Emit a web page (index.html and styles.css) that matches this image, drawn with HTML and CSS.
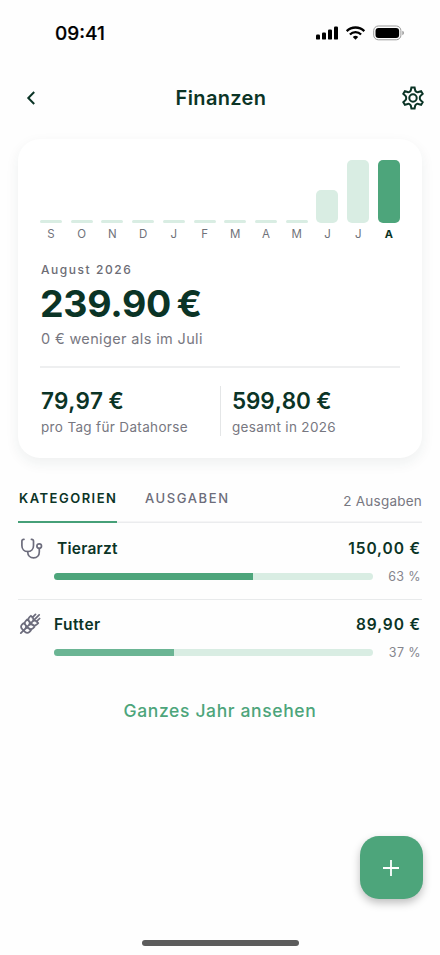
FILE: index.html
```html
<!DOCTYPE html>
<html lang="de">
<head>
<meta charset="utf-8">
<meta name="viewport" content="width=device-width, initial-scale=1">
<title>Finanzen</title>
<link rel="stylesheet" href="styles.css">
</head>
<body>
<div class="screen">
  <header class="status">
    <span class="clock">09:41</span>
    <svg class="status-icons" width="90" height="18" viewBox="0 0 90 18">
      <rect x="1" y="10.6" width="4" height="5" rx="1.2"/>
      <rect x="7" y="8.4" width="4" height="7.2" rx="1.2"/>
      <rect x="13" y="5.4" width="4" height="10.2" rx="1.2"/>
      <rect x="19" y="2.4" width="4" height="13.2" rx="1.2"/>
      <g fill="none" stroke="#000" stroke-width="2.3">
        <path d="M31.7 7.1a12.6 12.6 0 0 1 17.6 0"/>
        <path d="M34.9 10.5a8 8 0 0 1 11.2 0"/>
      </g>
      <path d="M40.500 15.800l-2.700-2.800a4 4 0 0 1 5.400 0z"/>
      <rect x="58.700" y="2" width="27.200" height="13.800" rx="4.600" fill="none" stroke="#999" stroke-width="1"/>
      <rect x="60.500" y="3.900" width="23.600" height="10" rx="3"/>
      <path d="M87.300 6.800q1.700.6 1.700 2.200t-1.700 2.200z" fill="#999"/>
    </svg>
  </header>

  <nav class="topbar">
    <svg class="back" width="24" height="24" viewBox="0 0 24 24"><path d="M15.200 6L9.300 12l5.900 6"/></svg>
    <h1>Finanzen</h1>
    <svg class="gear" width="24" height="24" viewBox="0 0 24 24"><path d="M10.400 1.600h3.200l.6 2.800q.3 1 1.300 1.500.9.500 1.900.1l2.700-.9 1.600 2.800-2.100 1.900q-.8.700-.8 2.200t.8 2.200l2.100 1.900-1.600 2.800-2.700-.9q-1-.4-1.900.1-1 .5-1.300 1.500l-.6 2.800h-3.200l-.6-2.800q-.3-1-1.300-1.500-.9-.5-1.900-.1l-2.700.9-1.600-2.800 2.100-1.900q.8-.7.8-2.200t-.8-2.200L2.300 7.900l1.600-2.800 2.700.9q1 .4 1.900-.1 1-.5 1.300-1.500z"/><circle cx="12" cy="12" r="3.700"/></svg>
  </nav>

  <section class="card">
    <div class="chart">
      <div class="col"><i class="bar"></i><span>S</span></div>
      <div class="col"><i class="bar"></i><span>O</span></div>
      <div class="col"><i class="bar"></i><span>N</span></div>
      <div class="col"><i class="bar"></i><span>D</span></div>
      <div class="col"><i class="bar"></i><span>J</span></div>
      <div class="col"><i class="bar"></i><span>F</span></div>
      <div class="col"><i class="bar"></i><span>M</span></div>
      <div class="col"><i class="bar"></i><span>A</span></div>
      <div class="col"><i class="bar"></i><span>M</span></div>
      <div class="col"><i class="bar tall" style="height:33px"></i><span>J</span></div>
      <div class="col"><i class="bar tall" style="height:63px"></i><span>J</span></div>
      <div class="col current"><i class="bar tall" style="height:63px"></i><span>A</span></div>
    </div>
    <div class="period">August 2026</div>
    <div class="total">239.90 €</div>
    <div class="compare">0 € weniger als im Juli</div>
    <div class="stats">
      <div class="stat"><b>79,97 €</b><span>pro Tag für Datahorse</span></div>
      <div class="stat"><b>599,80 €</b><span>gesamt in 2026</span></div>
    </div>
  </section>

  <div class="tabs">
    <div class="tab active">KATEGORIEN</div>
    <div class="tab second">AUSGABEN</div>
    <div class="count">2 Ausgaben</div>
  </div>

  <ul class="list">
    <li>
      <svg class="icon" width="24" height="24" viewBox="0 0 24 24"><path d="M5 2.300H4.600a1.700 1.700 0 0 0-1.700 1.700v4.700c0 3.400 2.400 5.800 5.800 5.800s5.800-2.400 5.800-5.800V4a1.700 1.700 0 0 0-1.700-1.700h-.4"/><path d="M8.700 14.700c0 3.700 2.500 6.200 5.900 6.200s5.700-2.500 5.700-6v-3.200"/><circle cx="20.200" cy="9.100" r="2.300"/></svg>
      <div class="body">
        <div class="line"><span class="name indented">Tierarzt</span><span class="amount">150,00 €</span></div>
        <div class="line"><div class="track"><div class="fill" style="width:62.5%"></div></div><span class="pct">63 %</span></div>
      </div>
    </li>
    <li>
      <svg class="icon wheat" width="22" height="22" viewBox="0 0 24 24"><path d="M2 22L16 8M3.470 12.530L5 11l1.530 1.530a3.500 3.500 0 0 1 0 4.940L5 19l-1.530-1.530a3.500 3.500 0 0 1 0-4.940zM7.470 8.530L9 7l1.530 1.530a3.500 3.500 0 0 1 0 4.940L9 15l-1.530-1.530a3.500 3.500 0 0 1 0-4.940zM11.470 4.530L13 3l1.530 1.530a3.500 3.500 0 0 1 0 4.940L13 11l-1.530-1.530a3.500 3.500 0 0 1 0-4.940zM11.470 17.470L13 19l-1.530 1.530a3.500 3.500 0 0 1-4.940 0L5 19l1.530-1.530a3.500 3.500 0 0 1 4.940 0zM15.470 13.470L17 15l-1.530 1.530a3.500 3.500 0 0 1-4.940 0L9 15l1.530-1.530a3.500 3.500 0 0 1 4.940 0zM19.470 9.470L21 11l-1.530 1.530a3.500 3.500 0 0 1-4.940 0L13 11l1.530-1.530a3.500 3.500 0 0 1 4.940 0zM14.500 5L18 1.500M16 8l6-6M19 9.500l3.500-3.500"/></svg>
      <div class="body">
        <div class="line"><span class="name">Futter</span><span class="amount">89,90 €</span></div>
        <div class="line"><div class="track"><div class="fill soft" style="width:37.500%"></div></div><span class="pct">37 %</span></div>
      </div>
    </li>
  </ul>

  <a class="year">Ganzes Jahr ansehen</a>

  <footer>
    <button class="fab" aria-label="Ausgabe hinzufügen"><svg width="16" height="16" viewBox="0 0 16 16"><path d="M8 0v16M0 8h16"/></svg></button>
    <div class="home"></div>
  </footer>
</div>
</body>
</html>
```
FILE: styles.css
```css
* { box-sizing: border-box; }
body { margin: 0; background: #fefefe; font-family: Inter, "Liberation Sans", sans-serif; color: #0b3426; }
svg { display: block; flex: none; }
.screen { width: 440px; height: 955px; display: flex; flex-direction: column; overflow: hidden; white-space: nowrap; }

.status { height: 66px; display: flex; justify-content: space-between; align-items: center; padding: 0 35px 0 55px; }
.clock { font-size: 19px; font-weight: 500; color: #000; -webkit-text-stroke: .2px #000; }

.topbar { height: 64px; display: flex; justify-content: space-between; align-items: center; padding: 0 15px 0 19px; }
.topbar path, .topbar circle { fill: none; stroke: #0b3426; stroke-width: 2; }
.topbar h1 { margin: 0; position: relative; left: -1px; font-size: 20px; font-weight: 600; letter-spacing: .35px; }

.card { margin: 9px 18px 0; height: 319px; padding: 21px 22px 0; background: #fff; border-radius: 22px; box-shadow: 0 5px 14px rgba(30, 50, 50, .07); display: flex; flex-direction: column; }
.chart { height: 82px; display: flex; justify-content: space-between; align-items: flex-end; }
.col { width: 22px; display: flex; flex-direction: column; align-items: center; }
.col span { font-size: 11.500px; line-height: 12px; margin-top: 5px; margin-bottom: 2px; color: #70727a; }
.bar { width: 22px; height: 3.500px; border-radius: 2px; background: #d9ede3; }
.bar.tall { border-radius: 5px; }
.current .bar { background: #4da57b; }
.col.current span { font-size: 11px; color: #0b3426; font-weight: 700; }
.period { margin-top: 19px; padding-left: 1px; font-size: 12px; line-height: 17px; font-weight: 500; letter-spacing: 1.550px; color: #6c6c75; }
.total { margin-top: 3px; font-size: 37.500px; line-height: 46px; font-weight: 700; letter-spacing: -.3px; word-spacing: -3px; }
.compare { margin-top: 2px; padding-left: 1px; font-size: 14.500px; line-height: 20px; letter-spacing: .36px; color: #777781; }
.stats { margin-top: 17px; padding-top: 18px; border-top: 2px solid #eeeff0; display: flex; }
.stat { width: 180px; height: 50px; padding-left: 1px; display: flex; flex-direction: column; }
.stat + .stat { border-left: 1px solid #e4e6e7; padding-left: 11px; }
.stat b { font-size: 22.500px; line-height: 30px; font-weight: 600; font-kerning: none; }
.stat + .stat b { letter-spacing: -.1px; }
.stat span { font-size: 13.500px; line-height: 20px; letter-spacing: .34px; color: #777781; margin-top: 1px; }

.tabs { margin: 25px 18px 0; height: 40px; display: flex; box-shadow: inset 0 -1.500px #ebecee; }
.tab { font-size: 13px; line-height: 30px; font-weight: 500; letter-spacing: 1.600px; color: #6c6c7a; }
.tab.active { width: 99px; padding-left: 1px; font-weight: 600; letter-spacing: 1.500px; color: #0b3426; border-bottom: 2px solid #46a078; }
.tab.second { margin-left: 28px; }
.count { margin-left: auto; font-size: 13.500px; line-height: 36px; letter-spacing: .22px; color: #777781; }

.list { margin: 0 18px; padding: 0; list-style: none; }
.list li { height: 76px; display: flex; padding: 13px 0 0 1px; }
.list li:first-child { padding-top: 14px; }
.list li + li { border-top: 1px solid #e8eaeb; }
.icon { fill: none; stroke: #6c6c7c; stroke-width: 1.700; stroke-linecap: round; stroke-linejoin: round; }
.icon.wheat { margin: 0 2px 0 0; stroke-width: 1.900; }
.body { flex: 1; margin-left: 11px; padding-right: 1px; }
.line { display: flex; justify-content: space-between; align-items: center; }
.name, .amount { font-size: 15.500px; line-height: 24px; font-weight: 600; letter-spacing: .5px; }
.amount { letter-spacing: .9px; }
.name.indented { margin-left: 3px; letter-spacing: .25px; }
.track { width: 319px; height: 6.500px; border-radius: 4px; background: #d9ede3; overflow: hidden; }
.fill { height: 7px; background: #4da57b; }
.fill.soft { background: #6bb594; }
.pct { font-size: 12.500px; line-height: 18px; letter-spacing: .4px; color: #85858d; margin-top: 7px; margin-bottom: -7px; }
.line .track { margin-top: 6px; margin-bottom: -7px; }

.year { margin-top: 24px; align-self: center; font-size: 17.500px; line-height: 24px; font-weight: 500; letter-spacing: .63px; color: #4da57b; }

footer { margin-top: auto; display: flex; flex-direction: column; }
.fab { width: 63px; height: 63px; margin: 0 17.500px 41px auto; padding: 0; border: 0; border-radius: 19px; background: #4da57b; display: flex; align-items: center; justify-content: center; box-shadow: 0 4px 8px rgba(0, 0, 0, .25); }
.fab svg { margin-right: 1px; }
.fab path { fill: none; stroke: #fff; stroke-width: 1.800; }
.home { width: 157px; height: 6px; margin: 0 0 9px 142px; border-radius: 3px; background: #5c5c5c; }
```
